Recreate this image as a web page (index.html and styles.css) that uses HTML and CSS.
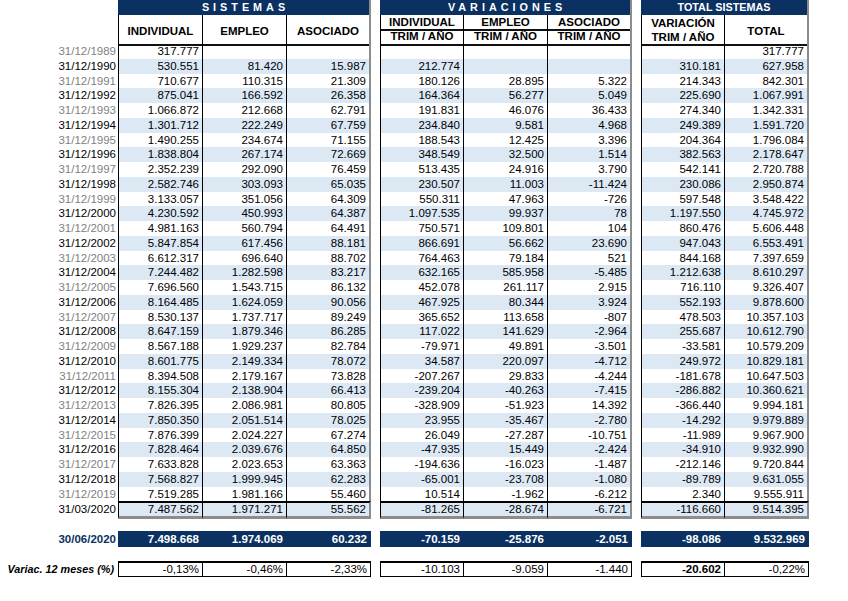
FILE: index.html
```html
<!DOCTYPE html>
<html lang="es">
<head>
<meta charset="utf-8">
<title>Sistemas</title>
<link rel="stylesheet" href="styles.css">
</head>
<body>
<div class="sheet">
  <div class="row titles">
    <div></div>
    <div class="title t3 spaced">SISTEMAS</div>
    <span></span>
    <div class="title t3 spaced">VARIACIONES</div>
    <span></span>
    <div class="title t2">TOTAL SISTEMAS</div>
  </div>
  <div class="row heads">
    <div></div>
    <div class="h first">INDIVIDUAL</div>
    <div class="h">EMPLEO</div>
    <div class="h last">ASOCIADO</div>
    <span></span>
    <div class="h first split"><div class="a">INDIVIDUAL</div><div class="b">TRIM / AÑO</div></div>
    <div class="h split"><div class="a">EMPLEO</div><div class="b">TRIM / AÑO</div></div>
    <div class="h last split"><div class="a">ASOCIADO</div><div class="b">TRIM / AÑO</div></div>
    <span></span>
    <div class="h first two">VARIACIÓN<br>TRIM / AÑO</div>
    <div class="h last">TOTAL</div>
  </div>

  <div class="row d"><div>31/12/1989</div><div>317.777</div><div></div><div></div><span></span><div></div><div></div><div></div><span></span><div></div><div>317.777</div></div>
  <div class="row d b"><div>31/12/1990</div><div>530.551</div><div>81.420</div><div>15.987</div><span></span><div>212.774</div><div></div><div></div><span></span><div>310.181</div><div>627.958</div></div>
  <div class="row d"><div>31/12/1991</div><div>710.677</div><div>110.315</div><div>21.309</div><span></span><div>180.126</div><div>28.895</div><div>5.322</div><span></span><div>214.343</div><div>842.301</div></div>
  <div class="row d b"><div>31/12/1992</div><div>875.041</div><div>166.592</div><div>26.358</div><span></span><div>164.364</div><div>56.277</div><div>5.049</div><span></span><div>225.690</div><div>1.067.991</div></div>
  <div class="row d"><div>31/12/1993</div><div>1.066.872</div><div>212.668</div><div>62.791</div><span></span><div>191.831</div><div>46.076</div><div>36.433</div><span></span><div>274.340</div><div>1.342.331</div></div>
  <div class="row d b"><div>31/12/1994</div><div>1.301.712</div><div>222.249</div><div>67.759</div><span></span><div>234.840</div><div>9.581</div><div>4.968</div><span></span><div>249.389</div><div>1.591.720</div></div>
  <div class="row d"><div>31/12/1995</div><div>1.490.255</div><div>234.674</div><div>71.155</div><span></span><div>188.543</div><div>12.425</div><div>3.396</div><span></span><div>204.364</div><div>1.796.084</div></div>
  <div class="row d b"><div>31/12/1996</div><div>1.838.804</div><div>267.174</div><div>72.669</div><span></span><div>348.549</div><div>32.500</div><div>1.514</div><span></span><div>382.563</div><div>2.178.647</div></div>
  <div class="row d"><div>31/12/1997</div><div>2.352.239</div><div>292.090</div><div>76.459</div><span></span><div>513.435</div><div>24.916</div><div>3.790</div><span></span><div>542.141</div><div>2.720.788</div></div>
  <div class="row d b"><div>31/12/1998</div><div>2.582.746</div><div>303.093</div><div>65.035</div><span></span><div>230.507</div><div>11.003</div><div>-11.424</div><span></span><div>230.086</div><div>2.950.874</div></div>
  <div class="row d"><div>31/12/1999</div><div>3.133.057</div><div>351.056</div><div>64.309</div><span></span><div>550.311</div><div>47.963</div><div>-726</div><span></span><div>597.548</div><div>3.548.422</div></div>
  <div class="row d b"><div>31/12/2000</div><div>4.230.592</div><div>450.993</div><div>64.387</div><span></span><div>1.097.535</div><div>99.937</div><div>78</div><span></span><div>1.197.550</div><div>4.745.972</div></div>
  <div class="row d"><div>31/12/2001</div><div>4.981.163</div><div>560.794</div><div>64.491</div><span></span><div>750.571</div><div>109.801</div><div>104</div><span></span><div>860.476</div><div>5.606.448</div></div>
  <div class="row d b"><div>31/12/2002</div><div>5.847.854</div><div>617.456</div><div>88.181</div><span></span><div>866.691</div><div>56.662</div><div>23.690</div><span></span><div>947.043</div><div>6.553.491</div></div>
  <div class="row d"><div>31/12/2003</div><div>6.612.317</div><div>696.640</div><div>88.702</div><span></span><div>764.463</div><div>79.184</div><div>521</div><span></span><div>844.168</div><div>7.397.659</div></div>
  <div class="row d b"><div>31/12/2004</div><div>7.244.482</div><div>1.282.598</div><div>83.217</div><span></span><div>632.165</div><div>585.958</div><div>-5.485</div><span></span><div>1.212.638</div><div>8.610.297</div></div>
  <div class="row d"><div>31/12/2005</div><div>7.696.560</div><div>1.543.715</div><div>86.132</div><span></span><div>452.078</div><div>261.117</div><div>2.915</div><span></span><div>716.110</div><div>9.326.407</div></div>
  <div class="row d b"><div>31/12/2006</div><div>8.164.485</div><div>1.624.059</div><div>90.056</div><span></span><div>467.925</div><div>80.344</div><div>3.924</div><span></span><div>552.193</div><div>9.878.600</div></div>
  <div class="row d"><div>31/12/2007</div><div>8.530.137</div><div>1.737.717</div><div>89.249</div><span></span><div>365.652</div><div>113.658</div><div>-807</div><span></span><div>478.503</div><div>10.357.103</div></div>
  <div class="row d b"><div>31/12/2008</div><div>8.647.159</div><div>1.879.346</div><div>86.285</div><span></span><div>117.022</div><div>141.629</div><div>-2.964</div><span></span><div>255.687</div><div>10.612.790</div></div>
  <div class="row d"><div>31/12/2009</div><div>8.567.188</div><div>1.929.237</div><div>82.784</div><span></span><div>-79.971</div><div>49.891</div><div>-3.501</div><span></span><div>-33.581</div><div>10.579.209</div></div>
  <div class="row d b"><div>31/12/2010</div><div>8.601.775</div><div>2.149.334</div><div>78.072</div><span></span><div>34.587</div><div>220.097</div><div>-4.712</div><span></span><div>249.972</div><div>10.829.181</div></div>
  <div class="row d"><div>31/12/2011</div><div>8.394.508</div><div>2.179.167</div><div>73.828</div><span></span><div>-207.267</div><div>29.833</div><div>-4.244</div><span></span><div>-181.678</div><div>10.647.503</div></div>
  <div class="row d b"><div>31/12/2012</div><div>8.155.304</div><div>2.138.904</div><div>66.413</div><span></span><div>-239.204</div><div>-40.263</div><div>-7.415</div><span></span><div>-286.882</div><div>10.360.621</div></div>
  <div class="row d"><div>31/12/2013</div><div>7.826.395</div><div>2.086.981</div><div>80.805</div><span></span><div>-328.909</div><div>-51.923</div><div>14.392</div><span></span><div>-366.440</div><div>9.994.181</div></div>
  <div class="row d b"><div>31/12/2014</div><div>7.850.350</div><div>2.051.514</div><div>78.025</div><span></span><div>23.955</div><div>-35.467</div><div>-2.780</div><span></span><div>-14.292</div><div>9.979.889</div></div>
  <div class="row d"><div>31/12/2015</div><div>7.876.399</div><div>2.024.227</div><div>67.274</div><span></span><div>26.049</div><div>-27.287</div><div>-10.751</div><span></span><div>-11.989</div><div>9.967.900</div></div>
  <div class="row d b"><div>31/12/2016</div><div>7.828.464</div><div>2.039.676</div><div>64.850</div><span></span><div>-47.935</div><div>15.449</div><div>-2.424</div><span></span><div>-34.910</div><div>9.932.990</div></div>
  <div class="row d"><div>31/12/2017</div><div>7.633.828</div><div>2.023.653</div><div>63.363</div><span></span><div>-194.636</div><div>-16.023</div><div>-1.487</div><span></span><div>-212.146</div><div>9.720.844</div></div>
  <div class="row d b"><div>31/12/2018</div><div>7.568.827</div><div>1.999.945</div><div>62.283</div><span></span><div>-65.001</div><div>-23.708</div><div>-1.080</div><span></span><div>-89.789</div><div>9.631.055</div></div>
  <div class="row d"><div>31/12/2019</div><div>7.519.285</div><div>1.981.166</div><div>55.460</div><span></span><div>10.514</div><div>-1.962</div><div>-6.212</div><span></span><div>2.340</div><div>9.555.911</div></div>
  <div class="row d b q"><div>31/03/2020</div><div>7.487.562</div><div>1.971.271</div><div>55.562</div><span></span><div>-81.265</div><div>-28.674</div><div>-6.721</div><span></span><div>-116.660</div><div>9.514.395</div></div>

  <div class="row n"><div>30/06/2020</div><div>7.498.668</div><div>1.974.069</div><div>60.232</div><span></span><div>-70.159</div><div>-25.876</div><div>-2.051</div><span></span><div>-98.086</div><div>9.532.969</div></div>

  <div class="row p"><div>Variac. 12 meses (%)</div><div>-0,13%</div><div>-0,46%</div><div>-2,33%</div><span></span><div>-10.103</div><div>-9.059</div><div>-1.440</div><span></span><div class="strong">-20.602</div><div>-0,22%</div></div>
</div>
</body>
</html>
```

FILE: styles.css
```css
* {
  box-sizing: border-box;
  margin: 0;
  padding: 0;
}

body {
  margin: 0;
  background: #ffffff;
  font-family: "Liberation Sans", Arial, sans-serif;
  font-size: 11.5px;
  color: #000000;
}

.sheet {
  width: 848px;
}

.row {
  display: grid;
  grid-template-columns: 118px 85px 84px 84px 9px 84px 84px 84px 9px 84px 84px;
}

/* Title band */
.titles {
  height: 15px;
}

.title {
  background: #0a3161;
  color: #ffffff;
  font-weight: bold;
  font-size: 10.8px;
  line-height: 15px;
  text-align: center;
  border-right: 2px solid #8c8c8c;
  white-space: nowrap;
}

.t3 {
  grid-column: span 3;
}

.t2 {
  grid-column: span 2;
}

.spaced {
  letter-spacing: 4px;
  padding-left: 4px;
}

/* Column headers */
.heads {
  height: 29px;
}

.h {
  display: flex;
  align-items: center;
  justify-content: center;
  padding-top: 2px;
  text-align: center;
  font-weight: bold;
  white-space: nowrap;
  border-right: 1px solid #000000;
  border-bottom: 2px solid #111111;
}

.h.first {
  border-left: 1px solid #000000;
}

.h.last {
  border-right: 2px solid #8c8c8c;
}

.h.split {
  display: block;
  padding-top: 0;
}

.split .a {
  height: 16px;
  line-height: 14px;
  border-bottom: 2px solid #111111;
}

.split .b {
  line-height: 11px;
}

.h.two {
  display: block;
  padding-top: 1px;
  line-height: 14px;
}

/* Data rows */
.d {
  height: 14.75px;
  line-height: 14.75px;
}

.d > div {
  text-align: right;
  padding-right: 3px;
  border-right: 1px solid #000000;
  white-space: nowrap;
}

.d > div:first-child {
  border-right: 0;
  padding-right: 2px;
  color: #7f7f7f;
}

.d > :nth-child(2),
.d > :nth-child(6),
.d > :nth-child(10) {
  border-left: 1px solid #000000;
}

.d > :nth-child(4),
.d > :nth-child(8),
.d > :nth-child(11) {
  border-right: 2px solid #8c8c8c;
}

.d.b > div:not(:first-child) {
  background: #dce9f5;
}

.d.b > div:first-child {
  color: #000000;
}

/* Last quarter row */
.d.q {
  height: 18px;
  line-height: 13px;
}

.d.q > div:not(:first-child) {
  border-top: 2px solid #000000;
  border-bottom: 3px solid #8c8c8c;
}

.d.q > div:first-child {
  padding-top: 2px;
}

/* Current period row */
.n {
  margin-top: 12px;
  height: 16px;
  line-height: 16px;
  font-weight: bold;
}

.n > div {
  text-align: right;
  padding-right: 3px;
  white-space: nowrap;
}

.n > div:not(:first-child) {
  background: #0a3161;
  color: #ffffff;
  border-right: 1px solid #0a3161;
}

.n > div:first-child {
  color: #0a3161;
  padding-right: 2px;
}

.n > :nth-child(4),
.n > :nth-child(8),
.n > :nth-child(11) {
  border-right: 2px solid #a9b6c6;
}

/* 12-month variation row */
.p {
  margin-top: 14px;
  height: 16px;
  line-height: 13px;
}

.p > div {
  text-align: right;
  padding-right: 3px;
  white-space: nowrap;
}

.p > div:not(:first-child) {
  border-top: 2px solid #000000;
  border-bottom: 1px solid #000000;
  border-right: 1px solid #000000;
}

.p > :nth-child(2),
.p > :nth-child(6),
.p > :nth-child(10) {
  border-left: 1px solid #000000;
}

.p > :nth-child(4),
.p > :nth-child(8),
.p > :nth-child(11) {
  border-right: 2px solid #555555;
}

.p > div:first-child {
  padding-top: 2px;
  padding-right: 4px;
  font-size: 10.8px;
  font-weight: bold;
  font-style: italic;
}

.p .strong {
  font-weight: bold;
}
```
